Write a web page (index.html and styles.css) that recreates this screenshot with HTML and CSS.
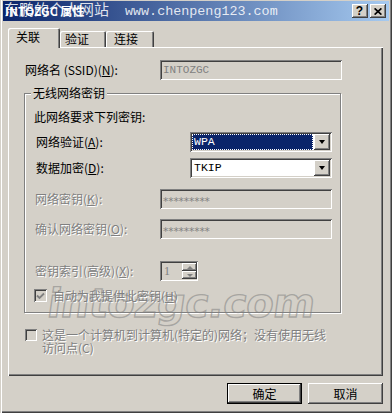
FILE: index.html
```html
<!DOCTYPE html>
<html lang="zh-CN">
<head>
    <meta charset="UTF-8">
    <meta name="viewport" content="width=device-width, initial-scale=1.0">
    <title>INTOZGC 属性</title>
    <link rel="stylesheet" href="styles.css">
</head>
<body>
    <div class="window">
        <div class="titlebar">
            <span class="title">INTOZGC 属性</span>
            <span class="stamp">东鹏的个人网站<span class="stamp-url">www.chenpeng123.com</span></span>
            <div class="caption-btns">
                <span class="cbtn help">?</span>
                <span class="cbtn close">
                    <svg width="8" height="7" viewBox="0 0 8 7"><path d="M0.6 0.4 L7.4 6.6 M7.4 0.4 L0.6 6.6" stroke="#000" stroke-width="1.7"/></svg>
                </span>
            </div>
        </div>

        <div class="tabs">
            <div class="tab active">关联</div>
            <div class="tab tab-auth">验证</div>
            <div class="tab tab-conn">连接</div>
        </div>

        <div class="panel">
            <div class="row ssid">
                <span class="lbl">网络名 (SSID)(<u>N</u>):</span>
                <div class="field disabled wide">INTOZGC</div>
            </div>

            <div class="group">
                <span class="legend">无线网络密钥</span>
                <div class="req">此网络要求下列密钥:</div>

                <div class="row pick pick-auth">
                    <span class="lbl">网络验证(<u>A</u>):</span>
                    <div class="combo">
                        <span class="combo-text selected">WPA</span>
                        <span class="drop"><i class="arrow"></i></span>
                    </div>
                </div>
                <div class="row pick pick-enc">
                    <span class="lbl">数据加密(<u>D</u>):</span>
                    <div class="combo">
                        <span class="combo-text">TKIP</span>
                        <span class="drop"><i class="arrow"></i></span>
                    </div>
                </div>

                <div class="row key key-first">
                    <span class="lbl off">网络密钥(<u>K</u>):</span>
                    <div class="field disabled stars">*********</div>
                </div>
                <div class="row key key-confirm">
                    <span class="lbl off">确认网络密钥(<u>O</u>):</span>
                    <div class="field disabled stars">*********</div>
                </div>

                <div class="row key key-index">
                    <span class="lbl off">密钥索引(高级)(<u>X</u>):</span>
                    <div class="spin">
                        <span class="spin-val">1</span>
                        <span class="spin-btns">
                            <span class="sbtn"><i class="arrow up"></i></span>
                            <span class="sbtn"><i class="arrow down"></i></span>
                        </span>
                    </div>
                </div>

                <div class="row auto">
                    <span class="check">
                        <svg width="9" height="8" viewBox="0 0 9 8"><path d="M1 3.5 L3.5 6 L8 1.5" fill="none" stroke="#808080" stroke-width="1.8"/></svg>
                    </span>
                    <span class="off">自动为我提供此密钥(<u>H</u>)</span>
                </div>
            </div>

            <div class="adhoc">
                <span class="check"></span>
                <span class="adhoc-text">这是一个计算机到计算机(特定的)网络；没有使用无线<br>访问点(C)</span>
            </div>

            <div class="watermark">intozgc.com</div>
        </div>

        <div class="buttons">
            <button class="default">确定</button>
            <button>取消</button>
        </div>
    </div>
</body>
</html>
```

FILE: styles.css
```css
:root {
    --face: #d4d0c8;
    --light: #ffffff;
    --shadow: #808080;
    --dark: #404040;
    --select: #0a246a;
}

* {
    box-sizing: border-box;
    margin: 0;
    padding: 0;
}

body {
    width: 392px;
    height: 413px;
    overflow: hidden;
    background: var(--face);
    color: #000;
    font-family: "Noto Sans CJK SC", "Liberation Sans", sans-serif;
    font-size: 12px;
    line-height: 14px;
}

u {
    text-decoration: underline;
    text-underline-offset: 1px;
}

.window {
    width: 392px;
    height: 413px;
    padding: 0 3px 3px 3px;
    display: flex;
    flex-direction: column;
    box-shadow: inset 1px 0 var(--face), inset 2px 0 var(--light),
                inset -1px -1px var(--dark), inset -2px -2px var(--shadow);
}

/* title bar */
.titlebar {
    position: relative;
    height: 20px;
    margin-top: 1px;
    padding: 0 3px 0 2px;
    display: flex;
    align-items: center;
    background: linear-gradient(to right, #0a246a, #a6caf0);
}

.title {
    color: #fff;
    font-weight: bold;
    font-size: 12px;
}

.stamp {
    position: absolute;
    left: 1px;
    top: -1px;
    color: rgba(255, 255, 255, 0.85);
    font-size: 15px;
    line-height: 17px;
    white-space: nowrap;
}

.stamp-url {
    margin-left: 16px;
    font-family: "Liberation Mono", monospace;
    font-size: 13.4px;
}

.caption-btns {
    margin-left: auto;
    display: flex;
    gap: 2px;
}

.cbtn {
    width: 16px;
    height: 14px;
    display: flex;
    align-items: center;
    justify-content: center;
    background: var(--face);
    box-shadow: inset -1px -1px var(--dark), inset 1px 1px var(--light),
                inset -2px -2px var(--shadow);
    font-family: "Liberation Sans", sans-serif;
    font-weight: bold;
    font-size: 12px;
    line-height: 12px;
}

.cbtn.help {
    padding-right: 1px;
}

/* tabs */
.tabs {
    height: 26px;
    padding-left: 5px;
    display: flex;
    align-items: flex-end;
}

.tab {
    position: relative;
    height: 16px;
    display: flex;
    align-items: center;
    padding-left: 8px;
    border-radius: 2px 2px 0 0;
    box-shadow: inset 1px 1px var(--light), inset -1px 0 var(--dark),
                inset -2px 0 var(--shadow);
}

.tab.active {
    z-index: 1;
    width: 52px;
    height: 20px;
    margin-bottom: -1px;
    padding: 0 0 3px 8px;
    background: var(--face);
}

.tab-auth {
    width: 46px;
    padding-left: 5px;
}

.tab-conn {
    width: 48px;
    padding-left: 8px;
}

/* tab page */
.panel {
    position: relative;
    width: 375px;
    height: 329px;
    margin-left: 5px;
    padding: 13px 0 0 16px;
    box-shadow: inset 1px 1px var(--light), inset -1px -1px var(--dark),
                inset -2px -2px var(--shadow);
}

.row {
    display: flex;
    align-items: center;
}

.ssid {
    height: 20px;
    padding-left: 1px;
}

.ssid .lbl {
    width: 135px;
}

.field {
    height: 20px;
    padding: 0 4px;
    display: flex;
    align-items: center;
    background: #fff;
    box-shadow: inset 1px 1px var(--shadow), inset -1px -1px var(--light),
                inset 2px 2px var(--dark), inset -2px -2px var(--face);
    font-family: "Liberation Mono", monospace;
    font-size: 11px;
}

.field.disabled {
    background: var(--face);
    color: var(--shadow);
}

.field.wide {
    width: 182px;
    padding-left: 3px;
}

.field.stars {
    width: 172px;
    padding: 4px 0 0 3px;
    font-family: "DejaVu Sans", sans-serif;
    font-size: 10.6px;
    letter-spacing: -0.1px;
}

/* group box */
.group {
    position: relative;
    width: 317px;
    height: 220px;
    margin-top: 13px;
    padding-left: 9px;
    border: 1px solid var(--shadow);
    box-shadow: inset 1px 1px var(--light), 1px 1px var(--light);
}

.legend {
    position: absolute;
    top: -8px;
    left: 6px;
    padding: 0 2px;
    background: var(--face);
}

.req {
    height: 16px;
    margin-top: 15px;
    display: flex;
    align-items: center;
}

.pick {
    height: 20px;
    padding-left: 2px;
}

.pick .lbl {
    width: 154px;
}

.pick-auth {
    margin-top: 7px;
}

.pick-enc {
    margin-top: 6px;
}

.combo {
    width: 142px;
    height: 20px;
    padding: 2px;
    display: flex;
    align-items: center;
    background: #fff;
    box-shadow: inset 1px 1px var(--shadow), inset -1px -1px var(--light),
                inset 2px 2px var(--dark), inset -2px -2px var(--face);
}

.combo-text {
    flex: 1;
    height: 16px;
    padding-left: 2px;
    display: flex;
    align-items: center;
    font-family: "Liberation Mono", monospace;
    font-size: 11.5px;
}

.combo-text.selected {
    margin: 0 1px 0 0;
    background: var(--select);
    color: #fff;
    outline: 1px dotted #fff;
    outline-offset: -1px;
}

.drop {
    width: 16px;
    height: 16px;
    display: flex;
    align-items: center;
    justify-content: center;
    background: var(--face);
    box-shadow: inset -1px -1px var(--dark), inset 1px 1px var(--light),
                inset -2px -2px var(--shadow);
}

.arrow {
    width: 0;
    height: 0;
    border-left: 3.5px solid transparent;
    border-right: 3.5px solid transparent;
    border-top: 4px solid #000;
}

.arrow.up {
    border-left-width: 3px;
    border-right-width: 3px;
    border-top: none;
    border-bottom: 3px solid var(--shadow);
}

.arrow.down {
    border-left-width: 3px;
    border-right-width: 3px;
    border-top: 3px solid var(--shadow);
}

.key {
    height: 20px;
    padding-left: 1px;
}

.key .lbl {
    width: 125px;
}

.key-first {
    margin-top: 11px;
}

.key-confirm {
    margin-top: 10px;
}

.key-index {
    margin-top: 22px;
}

.off {
    color: var(--shadow);
    text-shadow: 1px 1px var(--light);
}

.spin {
    width: 38px;
    height: 20px;
    padding: 2px 1px 2px 4px;
    display: flex;
    align-items: center;
    background: var(--face);
    box-shadow: inset 1px 1px var(--shadow), inset -1px -1px var(--light),
                inset 2px 2px var(--dark), inset -2px -2px var(--face);
}

.spin-val {
    flex: 1;
    color: var(--shadow);
    font-family: "Liberation Serif", serif;
    font-size: 12px;
}

.spin-btns {
    width: 15px;
    height: 16px;
    display: flex;
    flex-direction: column;
}

.sbtn {
    flex: 1;
    display: flex;
    align-items: center;
    justify-content: center;
    background: var(--face);
    box-shadow: inset -1px -1px var(--dark), inset 1px 1px var(--light),
                inset -2px -2px var(--shadow);
}

.check {
    width: 13px;
    height: 13px;
    display: flex;
    align-items: center;
    justify-content: center;
    background: var(--face);
    box-shadow: inset 1px 1px var(--shadow), inset -1px -1px var(--light),
                inset 2px 2px var(--dark), inset -2px -2px var(--face);
}

.auto {
    height: 13px;
    margin-top: 8px;
    gap: 6px;
}

.adhoc {
    margin-top: 15px;
    padding-left: 1px;
    display: flex;
    gap: 5px;
    align-items: flex-start;
}

.adhoc .check {
    width: 12px;
    height: 12px;
    margin-top: 1px;
}

.adhoc-text {
    line-height: 13px;
    color: var(--shadow);
    text-shadow: 1px 1px var(--light);
}

.watermark {
    position: absolute;
    left: 40px;
    top: 236px;
    transform: skewX(-8deg);
    font-family: "DejaVu Sans", sans-serif;
    font-weight: bold;
    font-size: 40px;
    line-height: 40px;
    letter-spacing: -0.5px;
    color: transparent;
    -webkit-text-stroke: 1.4px rgba(128, 128, 128, 0.55);
    pointer-events: none;
}

/* dialog buttons */
.buttons {
    margin-top: 7px;
    padding-right: 6px;
    display: flex;
    justify-content: flex-end;
    gap: 6px;
}

button {
    width: 75px;
    height: 21px;
    border: none;
    background: var(--face);
    font-family: inherit;
    font-size: 12px;
    box-shadow: inset -1px -1px var(--dark), inset 1px 1px var(--light),
                inset -2px -2px var(--shadow);
}

button.default {
    box-shadow: inset 0 0 0 1px #000, inset -2px -2px var(--dark),
                inset 2px 2px var(--light), inset -3px -3px var(--shadow);
}
```
